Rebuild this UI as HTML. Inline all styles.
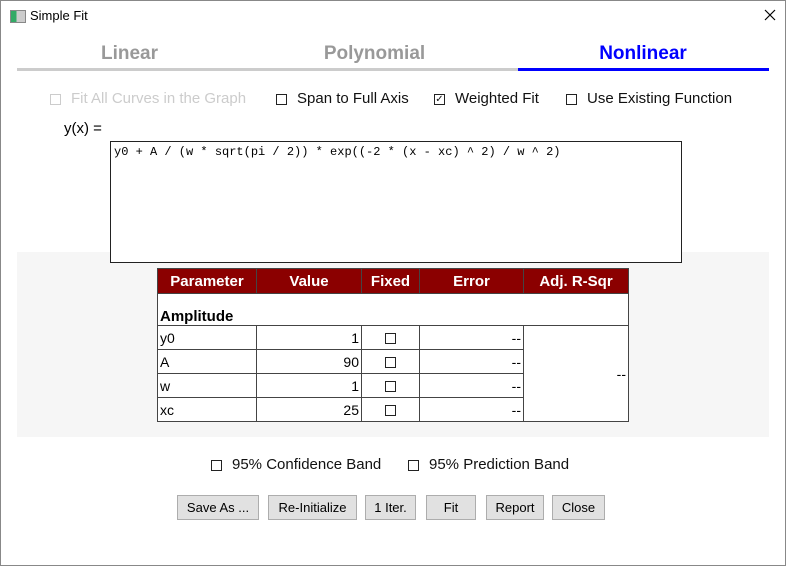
<!DOCTYPE html><html><head><style>
body{margin:0;width:786px;height:566px;background:#fff;font-family:"Liberation Sans",sans-serif;position:relative;overflow:hidden}
.a{position:absolute}
.win{left:0;top:0;width:784px;height:564px;border:1px solid #888}
.tab{font-weight:bold;font-size:19px;top:43px;text-align:center}
.cb{display:inline-block;width:9px;height:9px;border:1px solid #222;vertical-align:middle;margin-right:10px}
.opt{font-size:15px;top:90px;color:#111}
table{border-collapse:collapse;font-size:14px;table-layout:fixed}
td,th{border:1px solid #444;padding:0 2px;height:24px;box-sizing:border-box}
th{background:#8b0000;color:#fff;height:25px;font-size:15px}
.btn{top:495px;height:23px;border:1px solid #adadad;background:#e1e1e1;font-size:13px;text-align:center;line-height:23px}
</style></head><body>
<div class="a win"></div>
<div class="a" style="left:10px;top:10px;width:14px;height:11px;border:1px solid #888;background:linear-gradient(90deg,#3a6 0 40%,#ccc 40%)"></div>
<div class="a" style="left:30px;top:8px;font-size:13px">Simple Fit</div>
<svg class="a" style="left:764px;top:9px" width="12" height="12"><path d="M1 1L11 11M11 1L1 11" stroke="#000" stroke-width="1.2"/></svg>
<div class="a tab" style="left:17px;width:225px;color:#999">Linear</div>
<div class="a tab" style="left:262px;width:225px;color:#999">Polynomial</div>
<div class="a tab" style="left:518px;width:250px;color:#00f">Nonlinear</div>
<div class="a" style="left:17px;top:68px;width:501px;height:3px;background:#ccc"></div>
<div class="a" style="left:518px;top:68px;width:251px;height:3px;background:#00f"></div>
<div class="a opt" style="left:50px;color:#ccc"><span class="cb" style="border-color:#ccc"></span>Fit All Curves in the Graph</div>
<div class="a opt" style="left:276px"><span class="cb"></span>Span to Full Axis</div>
<div class="a opt" style="left:434px"><span class="cb" style="font-size:10px;line-height:9px;text-align:center">✓</span>Weighted Fit</div>
<div class="a opt" style="left:566px"><span class="cb"></span>Use Existing Function</div>
<div class="a" style="left:64px;top:120px;font-size:15px">y(x) =</div>
<div class="a" style="left:17px;top:252px;width:752px;height:185px;background:#f6f6f6"></div>
<div class="a" style="left:110px;top:141px;width:572px;height:122px;border:1px solid #222;background:#fff;font-family:'Liberation Mono',monospace;font-size:12px;padding:3px;box-sizing:border-box">y0 + A / (w * sqrt(pi / 2)) * exp((-2 * (x - xc) ^ 2) / w ^ 2)</div>
<table class="a" style="left:157px;top:268px;width:472px;background:#fff">
<tr><th style="width:99px">Parameter</th><th style="width:105px">Value</th><th style="width:58px">Fixed</th><th style="width:104px">Error</th><th>Adj. R-Sqr</th></tr>
<tr><td colspan="5" style="height:32px;font-weight:bold;font-size:15px;vertical-align:bottom">Amplitude</td></tr>
<tr><td>y0</td><td align="right">1</td><td align="center"><span class="cb" style="margin:0"></span></td><td align="right">--</td><td rowspan="4" align="right">--</td></tr>
<tr><td>A</td><td align="right">90</td><td align="center"><span class="cb" style="margin:0"></span></td><td align="right">--</td></tr>
<tr><td>w</td><td align="right">1</td><td align="center"><span class="cb" style="margin:0"></span></td><td align="right">--</td></tr>
<tr><td>xc</td><td align="right">25</td><td align="center"><span class="cb" style="margin:0"></span></td><td align="right">--</td></tr>
</table>
<div class="a opt" style="left:211px;top:456px"><span class="cb"></span>95% Confidence Band</div>
<div class="a opt" style="left:408px;top:456px"><span class="cb"></span>95% Prediction Band</div>
<div class="a btn" style="left:177px;width:80px">Save As ...</div>
<div class="a btn" style="left:268px;width:87px">Re-Initialize</div>
<div class="a btn" style="left:365px;width:49px">1 Iter.</div>
<div class="a btn" style="left:426px;width:48px">Fit</div>
<div class="a btn" style="left:486px;width:56px">Report</div>
<div class="a btn" style="left:552px;width:51px">Close</div>
</body></html>
